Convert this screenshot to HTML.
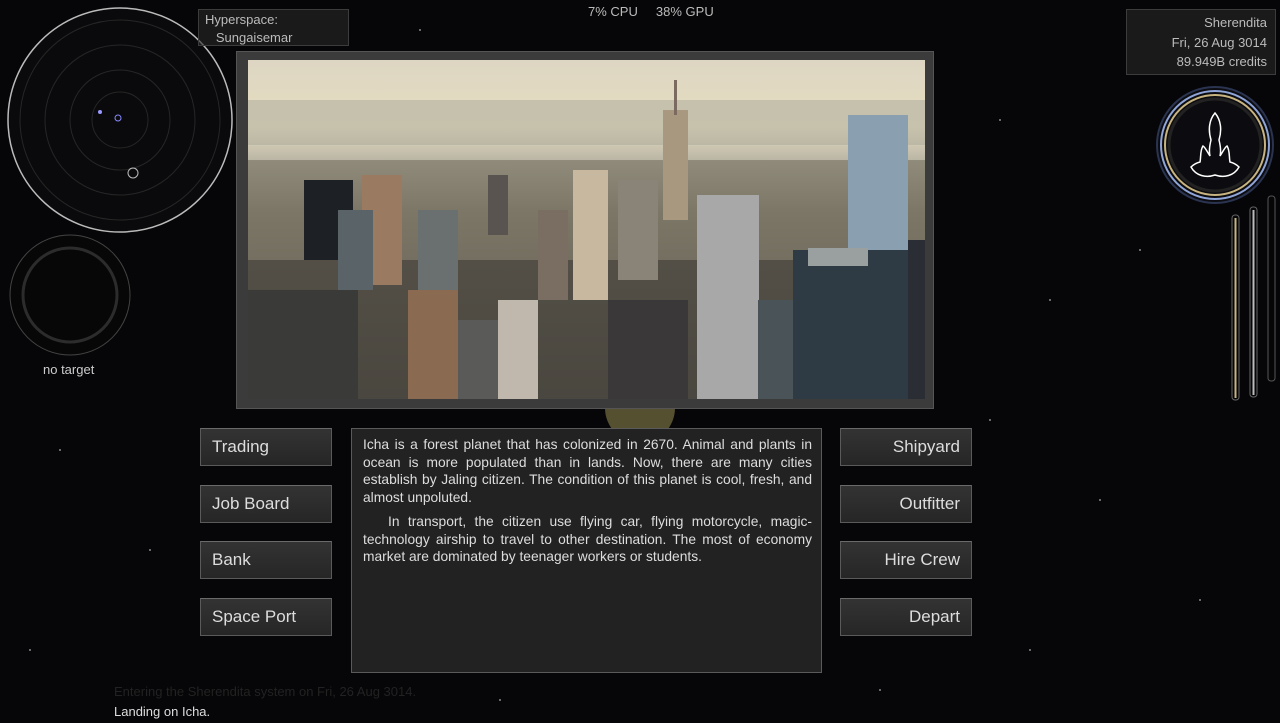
<!DOCTYPE html>
<html><head><meta charset="utf-8"><style>
*{margin:0;padding:0;box-sizing:border-box}
body{width:1280px;height:723px;background:#060608;overflow:hidden;position:relative;font-family:"Liberation Sans",sans-serif;color:#c8c8c8}
.abs{position:absolute}
.btn{position:absolute;width:132px;height:38px;background:linear-gradient(#333,#262626);border:1px solid #5a5a5a;border-top-color:#6a6a6a;color:#ddd;font-size:17px;line-height:36px;padding:0 11px}
.r{text-align:right}
.box{background:rgba(40,40,40,.6);border:1px solid #3c3c3c;font-size:13px;color:#bbb}
</style></head><body>
<svg class="abs" style="left:0;top:0" width="1280" height="723">
<g fill="#888">
<circle cx="150" cy="40" r="1"/><circle cx="420" cy="30" r="1"/><circle cx="1000" cy="120" r="1"/><circle cx="1050" cy="300" r="1"/><circle cx="1100" cy="500" r="1"/><circle cx="1200" cy="600" r="1"/><circle cx="60" cy="450" r="1"/><circle cx="150" cy="550" r="1"/><circle cx="1030" cy="650" r="1"/><circle cx="990" cy="420" r="1"/><circle cx="1140" cy="250" r="1"/><circle cx="30" cy="650" r="1"/><circle cx="500" cy="700" r="1"/><circle cx="880" cy="690" r="1"/>
</g>
<circle cx="120" cy="120" r="112" fill="#0a0a0c" stroke="#bbb" stroke-width="1.5"/>
<circle cx="120" cy="120" r="100" fill="none" stroke="#262626"/>
<circle cx="120" cy="120" r="75" fill="none" stroke="#262626"/>
<circle cx="120" cy="120" r="50" fill="none" stroke="#262626"/>
<circle cx="120" cy="120" r="28" fill="none" stroke="#262626"/>
<circle cx="118" cy="118" r="3" fill="none" stroke="#88f"/><circle cx="100" cy="112" r="2" fill="#99f"/>
<circle cx="133" cy="173" r="5" fill="none" stroke="#bbb"/>
<circle cx="70" cy="295" r="60" fill="#070708" stroke="#444"/>
<circle cx="70" cy="295" r="47" fill="none" stroke="#2c2c2c" stroke-width="3"/>
<circle cx="1215" cy="145" r="58" fill="#0c0c10" stroke="#2a3450" stroke-width="2"/>
<circle cx="1215" cy="145" r="54" fill="none" stroke="#8fa5d8" stroke-width="2"/>
<circle cx="1215" cy="145" r="50" fill="none" stroke="#c8b480" stroke-width="2"/>
<circle cx="1215" cy="145" r="46" fill="none" stroke="#222" stroke-width="3"/>
<path d="M1215 113 C1209 120 1208 130 1211 140 C1209 148 1209 152 1210 156 C1206 150 1205 147 1203 146 C1200 150 1201 158 1200 162 C1196 163 1193 165 1191 167 C1196 176 1206 178 1215 175 C1224 178 1234 176 1239 167 C1237 165 1234 163 1230 162 C1229 158 1230 150 1227 146 C1225 147 1224 150 1220 156 C1221 152 1221 148 1219 140 C1222 130 1221 120 1215 113Z" fill="none" stroke="#fff" stroke-width="1.5"/>
<rect x="1232" y="215" width="7" height="185" rx="3" fill="none" stroke="#666"/><rect x="1234.5" y="218" width="2" height="180" fill="#c8b480"/>
<rect x="1250" y="207" width="7" height="190" rx="3" fill="none" stroke="#666"/><rect x="1252.5" y="210" width="2" height="185" fill="#bbb"/>
<rect x="1268" y="196" width="7" height="185" rx="3" fill="none" stroke="#555"/>
<circle cx="640" cy="408" r="35" fill="#555030"/>
</svg>
<div class="abs box" style="left:198px;top:9px;width:151px;height:37px;padding:1px 6px;line-height:18px">Hyperspace:<br>&nbsp;&nbsp;&nbsp;Sungaisemar</div>
<div class="abs" style="left:588px;top:4px;font-size:13px;color:#bbb">7% CPU &nbsp;&nbsp;&nbsp;&nbsp;38% GPU</div>
<div class="abs box" style="left:1126px;top:9px;width:150px;height:66px;text-align:right;padding:3px 8px;line-height:19.5px">Sherendita<br>Fri, 26 Aug 3014<br>89.949B credits</div>
<div class="abs" style="left:43px;top:362px;font-size:13px;color:#ccc">no target</div>
<div class="abs" style="left:236px;top:51px;width:698px;height:358px;background:#3b3b3b;border:1px solid #555"></div>
<svg class="abs" style="left:248px;top:60px" width="677" height="339">
<defs>
<linearGradient id="sky" x1="0" y1="0" x2="0" y2="1"><stop offset="0" stop-color="#ddd6c2"/><stop offset=".2" stop-color="#e6dcc0"/><stop offset=".3" stop-color="#b8b4a4"/><stop offset=".45" stop-color="#8e8878"/><stop offset="1" stop-color="#4a4a48"/></linearGradient>
</defs>
<rect width="677" height="339" fill="url(#sky)"/>
<rect x="0" y="40" width="677" height="45" fill="#a8a898" opacity=".5"/>
<rect x="0" y="100" width="677" height="239" fill="#6e6858" opacity=".55"/>
<rect x="0" y="200" width="677" height="139" fill="#3e3a36" opacity=".6"/>
<g>
<rect x="56" y="120" width="49" height="80" fill="#1d2025"/>
<rect x="114" y="115" width="40" height="110" fill="#9a7a60"/>
<rect x="170" y="150" width="40" height="110" fill="#6a7070"/>
<rect x="240" y="115" width="20" height="60" fill="#5a5450"/>
<rect x="325" y="110" width="35" height="130" fill="#c8b8a0"/>
<rect x="415" y="50" width="25" height="110" fill="#a89880"/>
<rect x="426" y="20" width="3" height="35" fill="#7a6a60"/>
<rect x="449" y="135" width="62" height="204" fill="#a8a8a8"/>
<rect x="600" y="55" width="60" height="140" fill="#8aa0b0"/>
<rect x="545" y="190" width="115" height="149" fill="#2e3a44"/>
<rect x="560" y="188" width="60" height="18" fill="#9aa0a0"/>
<rect x="0" y="230" width="110" height="109" fill="#3a3a38"/>
<rect x="160" y="230" width="50" height="109" fill="#8a6a50"/>
<rect x="210" y="260" width="80" height="79" fill="#5a5a58"/>
<rect x="250" y="240" width="40" height="99" fill="#c0b8ac"/>
<rect x="360" y="240" width="80" height="99" fill="#3a3838"/>
<rect x="510" y="240" width="35" height="99" fill="#4a5458"/>
<rect x="660" y="180" width="17" height="159" fill="#2a2e34"/>
<rect x="90" y="150" width="35" height="80" fill="#5a6468"/>
<rect x="290" y="150" width="30" height="90" fill="#7a6e62"/>
<rect x="370" y="120" width="40" height="100" fill="#8a8478"/>
</g>
</svg>
<div class="btn" style="left:200px;top:428px">Trading</div>
<div class="btn" style="left:200px;top:485px">Job Board</div>
<div class="btn" style="left:200px;top:541px">Bank</div>
<div class="btn" style="left:200px;top:598px">Space Port</div>
<div class="btn r" style="left:840px;top:428px">Shipyard</div>
<div class="btn r" style="left:840px;top:485px">Outfitter</div>
<div class="btn r" style="left:840px;top:541px">Hire Crew</div>
<div class="btn r" style="left:840px;top:598px">Depart</div>
<div class="abs" style="left:351px;top:428px;width:471px;height:245px;background:#222;border:1px solid #5a5a5a;padding:7px 9px 0 11px;font-size:13.8px;line-height:17.7px;text-align:justify;color:#ddd">
<p>Icha is a forest planet that has colonized in 2670. Animal and plants in ocean is more populated than in lands. Now, there are many cities establish by Jaling citizen. The condition of this planet is cool, fresh, and almost unpoluted.</p>
<p style="margin-top:6px">&nbsp;&nbsp;&nbsp;In transport, the citizen use flying car, flying motorcycle, magic-technology airship to travel to other destination. The most of economy market are dominated by teenager workers or students.</p>
</div>
<div class="abs" style="left:114px;top:684px;font-size:13px;color:#222">Entering the Sherendita system on Fri, 26 Aug 3014.</div>
<div class="abs" style="left:114px;top:704px;font-size:13px;color:#ddd">Landing on Icha.</div>
</body></html>
